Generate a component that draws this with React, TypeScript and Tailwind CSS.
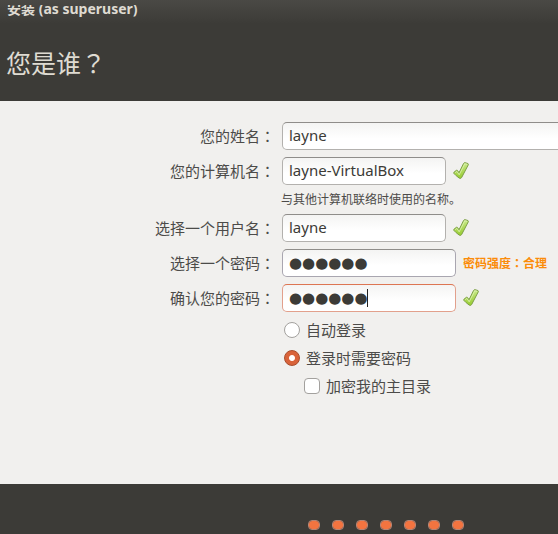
import { useState, type ReactNode } from "react";

const cjk = "font-['Noto_Sans','Noto_Sans_CJK_SC',sans-serif]";

function CheckMark() {
  return (
    <svg viewBox="0 0 18 20" className="h-5 w-[18px] shrink-0" role="img" aria-label="有效">
      <defs>
        <linearGradient id="tick" x1="0" y1="0" x2="0" y2="1">
          <stop offset="0" stopColor="#c8e98a" />
          <stop offset="1" stopColor="#98cc30" />
        </linearGradient>
      </defs>
      <path
        d="M0.9 11.3 L3.4 9.3 Q4.2 8.9 4.7 9.7 L6 11.8 L10.6 2.4 Q11.1 1.5 12 1.7 L14.9 2.5 Q15.7 2.9 15.3 3.8 L8.6 16.6 Q7.6 18 6.2 17.1 Q2.8 14.6 0.8 12.3 Q0.4 11.8 0.9 11.3 Z"
        fill="url(#tick)"
        stroke="#7c9f45"
        strokeWidth="1"
      />
      <path d="M2.2 11.7 L3.9 10.4 L6.2 13.8 L11.8 2.8 L14 3.3" fill="none" stroke="#def3b4" strokeWidth="0.8" />
    </svg>
  );
}

function Label({ htmlFor, children }: { htmlFor: string; children: ReactNode }) {
  return (
    <label htmlFor={htmlFor} className="w-[275px] shrink-0 text-right">
      {children}
      <span className="font-['Noto_Sans_CJK_TC',sans-serif]">：</span>
    </label>
  );
}

const field =
  "h-7 rounded-[5px] border border-[#b3b1ae] border-t-[#8f8d8a] bg-linear-to-b from-[#f4f4f3] to-white to-60% px-1.5 pb-0.5 text-[#3c3b37] outline-none";
const secret =
  "h-7 w-full rounded-[5px] border bg-linear-to-b from-[#f4f4f3] to-white to-60% px-1.5 font-['DejaVu_Sans',sans-serif] text-[15px] text-[#3c3b37] caret-transparent outline-none";
const radio =
  "size-4 shrink-0 appearance-none rounded-full border border-[#a3a19e] bg-white checked:border-[#a84c2b] checked:bg-radial checked:from-white checked:from-25% checked:to-[#d9633a] checked:to-35%";

export default function App() {
  const [login, setLogin] = useState("password");
  return (
    <div className={`flex min-h-screen flex-col bg-[#f1f0ee] text-[15px] leading-5 text-[#4c4b49] ${cjk}`}>
      <header className="h-[101px] bg-[#3c3b37] text-[#dfdbd2]">
        <div className="h-6 bg-linear-to-b from-[#4a4945] to-[#3c3b37] pt-[5px]">
          <div className="flex h-4 items-start overflow-hidden pl-[7px] text-[14px] font-bold">
            <span className="-mt-1.5 leading-5">安装 (as superuser)</span>
          </div>
        </div>
        <h1 className="pt-5 pl-1.5 text-[25px] leading-9">
          您是谁<span className="font-['Noto_Sans_CJK_TC',sans-serif]">？</span>
        </h1>
      </header>

      <main className="flex-1 overflow-hidden pt-[21px]">
        <form className="flex flex-col gap-[7px]">
          <div className="flex items-center gap-[7px]">
            <Label htmlFor="name">您的姓名</Label>
            <input id="name" defaultValue="layne" className={`${field} -mr-2 min-w-0 flex-1`} />
          </div>
          <div className="flex items-center gap-[7px]">
            <Label htmlFor="host">您的计算机名</Label>
            <input id="host" defaultValue="layne-VirtualBox" className={`${field} w-[164px]`} />
            <CheckMark />
          </div>
          <p className="pl-[281px] text-[12px] leading-[15px]">与其他计算机联络时使用的名称。</p>
          <div className="flex items-center gap-[7px]">
            <Label htmlFor="user">选择一个用户名</Label>
            <input id="user" defaultValue="layne" className={`${field} w-[164px]`} />
            <CheckMark />
          </div>
          <div className="flex items-center gap-[7px]">
            <Label htmlFor="pass">选择一个密码</Label>
            <div className="w-[174px] shrink-0">
              <input id="pass" defaultValue="●●●●●●" className={`${secret} border-[#a9a6b0] border-t-[#8f8d8a]`} />
            </div>
            <strong className="text-[12px] whitespace-nowrap text-[#fb8c0a]">
              密码强度<span className="font-['Noto_Sans_CJK_TC',sans-serif]">：</span>合理
            </strong>
          </div>
          <div className="flex items-center gap-[7px]">
            <Label htmlFor="confirm">确认您的密码</Label>
            <div className="relative w-[174px] shrink-0">
              <input id="confirm" defaultValue="●●●●●●" className={`${secret} border-[#e2a08c] border-t-[#dd7552]`} />
              <span className="absolute top-[5px] left-[85px] h-[18px] w-px bg-[#222]" />
            </div>
            <CheckMark />
          </div>

          <fieldset className="-mt-[3px] pl-[284px]">
            <label className="flex h-7 items-center gap-1.5">
              <input
                type="radio"
                name="login"
                className={radio}
                checked={login === "auto"}
                onChange={() => setLogin("auto")}
              />
              自动登录
            </label>
            <label className="flex h-7 items-center gap-1.5">
              <input
                type="radio"
                name="login"
                className={radio}
                checked={login === "password"}
                onChange={() => setLogin("password")}
              />
              登录时需要密码
            </label>
            <label className="flex h-7 items-center gap-1.5 pl-5">
              <input
                type="checkbox"
                className="size-4 shrink-0 appearance-none rounded border border-[#a3a19e] bg-white checked:bg-[#cf5b31]"
              />
              加密我的主目录
            </label>
          </fieldset>
        </form>
      </main>

      <footer className="flex h-[50px] gap-3 bg-[#3c3b37] pt-9 pl-[308px]">
        {[1, 2, 3, 4, 5, 6, 7].map((step) => (
          <span key={step} className="h-2.5 w-3 shrink-0 rounded-[4px] border border-[#b58474] bg-[#f37440] bg-clip-padding" />
        ))}
      </footer>
    </div>
  );
}
